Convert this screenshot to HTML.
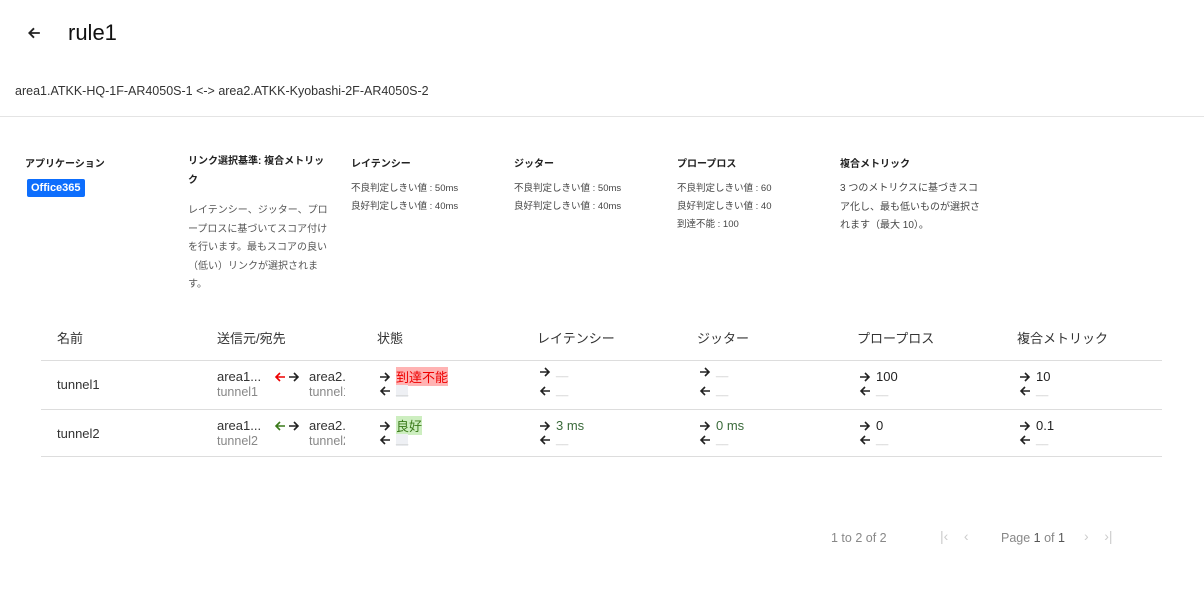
<!DOCTYPE html>
<html><head><meta charset="utf-8"><style>
*{margin:0;padding:0;box-sizing:border-box}
body{width:1204px;height:602px;background:#fff;font-family:"Liberation Sans","Noto Sans CJK JP",sans-serif;color:#222;position:relative;overflow:hidden}
.a{position:absolute;white-space:nowrap}
.h{font-size:10px;font-weight:bold;color:#222}
.s{font-size:9.5px;color:#444;line-height:18px}
.d{font-size:10px;color:#555;line-height:18.5px;white-space:normal}
.th{font-size:13px;color:#333}
.td{font-size:13px;color:#333}
.ar{font-size:13px;color:#222;display:flex;align-items:center;gap:5px}
.dash{color:#ccc;font-size:11px}
.line{position:absolute;left:41px;width:1121px;height:1px;background:#ddd}
.g{font-size:12.5px;color:#888}
svg.r,svg.l{width:12px;height:12px;flex:none}
</style></head><body>
<svg width="0" height="0" style="position:absolute"><defs>
<symbol id="R" viewBox="0 0 12 12"><path d="M1 6H10M6 2L10 6L6 10" fill="none" stroke="currentColor" stroke-width="1.6"/></symbol>
<symbol id="L" viewBox="0 0 12 12"><path d="M11 6H2M6 2L2 6L6 10" fill="none" stroke="currentColor" stroke-width="1.6"/></symbol>
</defs></svg>
<div class="a" style="left:27px;top:26px"><svg width="14" height="14" viewBox="0 0 12 12"><use href="#L"/></svg></div>
<div class="a" style="left:68px;top:20px;font-size:22px;color:#111">rule1</div>
<div class="a" style="left:15px;top:84px;font-size:12.5px;color:#333">area1.ATKK-HQ-1F-AR4050S-1 &lt;-&gt; area2.ATKK-Kyobashi-2F-AR4050S-2</div>
<div style="position:absolute;left:0;top:116px;width:1204px;height:1px;background:#e4e4e4"></div>

<div class="a h" style="left:25px;top:155px">アプリケーション</div>
<div class="a" style="left:27px;top:179px;background:#0d6efd;color:#fff;font-size:11px;font-weight:bold;padding:3px 4px;border-radius:2px">Office365</div>

<div class="a h" style="left:188px;top:152px;line-height:19px;white-space:normal;width:140px">リンク選択基準: 複合メトリック</div>
<div class="a d" style="left:188px;top:202px;width:146px">レイテンシー、ジッター、プロープロスに基づいてスコア付けを行います。最もスコアの良い（低い）リンクが選択されます。</div>

<div class="a h" style="left:351px;top:155px">レイテンシー</div>
<div class="a s" style="left:351px;top:180px">不良判定しきい値 : 50ms<br>良好判定しきい値 : 40ms</div>
<div class="a h" style="left:514px;top:155px">ジッター</div>
<div class="a s" style="left:514px;top:180px">不良判定しきい値 : 50ms<br>良好判定しきい値 : 40ms</div>
<div class="a h" style="left:677px;top:155px">プロープロス</div>
<div class="a s" style="left:677px;top:180px">不良判定しきい値 : 60<br>良好判定しきい値 : 40<br>到達不能 : 100</div>
<div class="a h" style="left:840px;top:155px">複合メトリック</div>
<div class="a d" style="left:840px;top:180px;width:144px;color:#444">3 つのメトリクスに基づきスコア化し、最も低いものが選択されます（最大 10）。</div>

<div class="a th" style="left:57px;top:328px">名前</div>
<div class="a th" style="left:217px;top:328px">送信元/宛先</div>
<div class="a th" style="left:377px;top:328px">状態</div>
<div class="a th" style="left:537px;top:328px">レイテンシー</div>
<div class="a th" style="left:697px;top:328px">ジッター</div>
<div class="a th" style="left:857px;top:328px">プロープロス</div>
<div class="a th" style="left:1017px;top:328px">複合メトリック</div>
<div class="line" style="top:360px"></div>
<div class="line" style="top:409px"></div>
<div class="line" style="top:456px"></div>

<!-- row1 -->
<div class="a td" style="left:57px;top:377px">tunnel1</div>
<div class="a td" style="left:217px;top:369px">area1...</div>
<div class="a g" style="left:217px;top:385px">tunnel1</div>
<div class="a ar" style="left:274px;top:371px;gap:2px"><svg class="l" style="color:#e00"><use href="#L"/></svg><svg class="r"><use href="#R"/></svg></div>
<div class="a td" style="left:309px;top:369px;width:36px;overflow:hidden">area2.</div>
<div class="a g" style="left:309px;top:385px;width:36px;overflow:hidden">tunnel1</div>
<div class="a ar" style="left:379px;top:367px"><svg class="r"><use href="#R"/></svg><span style="background:#ffb3b3;color:#e00">到達不能</span></div>
<div class="a ar" style="left:379px;top:385px"><svg class="l"><use href="#L"/></svg><span class="dash" style="background:#eef0f4">__</span></div>
<div class="a ar" style="left:539px;top:366px"><svg class="r"><use href="#R"/></svg><span class="dash">__</span></div>
<div class="a ar" style="left:539px;top:385px"><svg class="l"><use href="#L"/></svg><span class="dash">__</span></div>
<div class="a ar" style="left:699px;top:366px"><svg class="r"><use href="#R"/></svg><span class="dash">__</span></div>
<div class="a ar" style="left:699px;top:385px"><svg class="l"><use href="#L"/></svg><span class="dash">__</span></div>
<div class="a ar" style="left:859px;top:369px"><svg class="r"><use href="#R"/></svg>100</div>
<div class="a ar" style="left:859px;top:385px"><svg class="l"><use href="#L"/></svg><span class="dash">__</span></div>
<div class="a ar" style="left:1019px;top:369px"><svg class="r"><use href="#R"/></svg>10</div>
<div class="a ar" style="left:1019px;top:385px"><svg class="l"><use href="#L"/></svg><span class="dash">__</span></div>

<!-- row2 -->
<div class="a td" style="left:57px;top:426px">tunnel2</div>
<div class="a td" style="left:217px;top:418px">area1...</div>
<div class="a g" style="left:217px;top:434px">tunnel2</div>
<div class="a ar" style="left:274px;top:420px;gap:2px"><svg class="l" style="color:#3a7a1a"><use href="#L"/></svg><svg class="r"><use href="#R"/></svg></div>
<div class="a td" style="left:309px;top:418px;width:36px;overflow:hidden">area2.</div>
<div class="a g" style="left:309px;top:434px;width:36px;overflow:hidden">tunnel2</div>
<div class="a ar" style="left:379px;top:416px"><svg class="r"><use href="#R"/></svg><span style="background:#cdeec0;color:#3a7a1a">良好</span></div>
<div class="a ar" style="left:379px;top:434px"><svg class="l"><use href="#L"/></svg><span class="dash" style="background:#eef0f4">__</span></div>
<div class="a ar" style="left:539px;top:418px"><svg class="r"><use href="#R"/></svg><span style="color:#3a6a3a">3 ms</span></div>
<div class="a ar" style="left:539px;top:434px"><svg class="l"><use href="#L"/></svg><span class="dash">__</span></div>
<div class="a ar" style="left:699px;top:418px"><svg class="r"><use href="#R"/></svg><span style="color:#3a6a3a">0 ms</span></div>
<div class="a ar" style="left:699px;top:434px"><svg class="l"><use href="#L"/></svg><span class="dash">__</span></div>
<div class="a ar" style="left:859px;top:418px"><svg class="r"><use href="#R"/></svg>0</div>
<div class="a ar" style="left:859px;top:434px"><svg class="l"><use href="#L"/></svg><span class="dash">__</span></div>
<div class="a ar" style="left:1019px;top:418px"><svg class="r"><use href="#R"/></svg>0.1</div>
<div class="a ar" style="left:1019px;top:434px"><svg class="l"><use href="#L"/></svg><span class="dash">__</span></div>

<div class="a" style="left:831px;top:531px;font-size:12.5px;color:#888">1 to 2 of 2</div>
<div class="a" style="left:940px;top:528px;font-size:14px;color:#ccc">|&#8249;&nbsp;&nbsp;&nbsp;&nbsp;&#8249;</div>
<div class="a" style="left:1001px;top:531px;font-size:12.5px;color:#888">Page <span style="color:#555">1</span> of <span style="color:#555">1</span></div>
<div class="a" style="left:1084px;top:528px;font-size:14px;color:#ccc">&#8250;&nbsp;&nbsp;&nbsp;&nbsp;&#8250;|</div>
</body></html>
